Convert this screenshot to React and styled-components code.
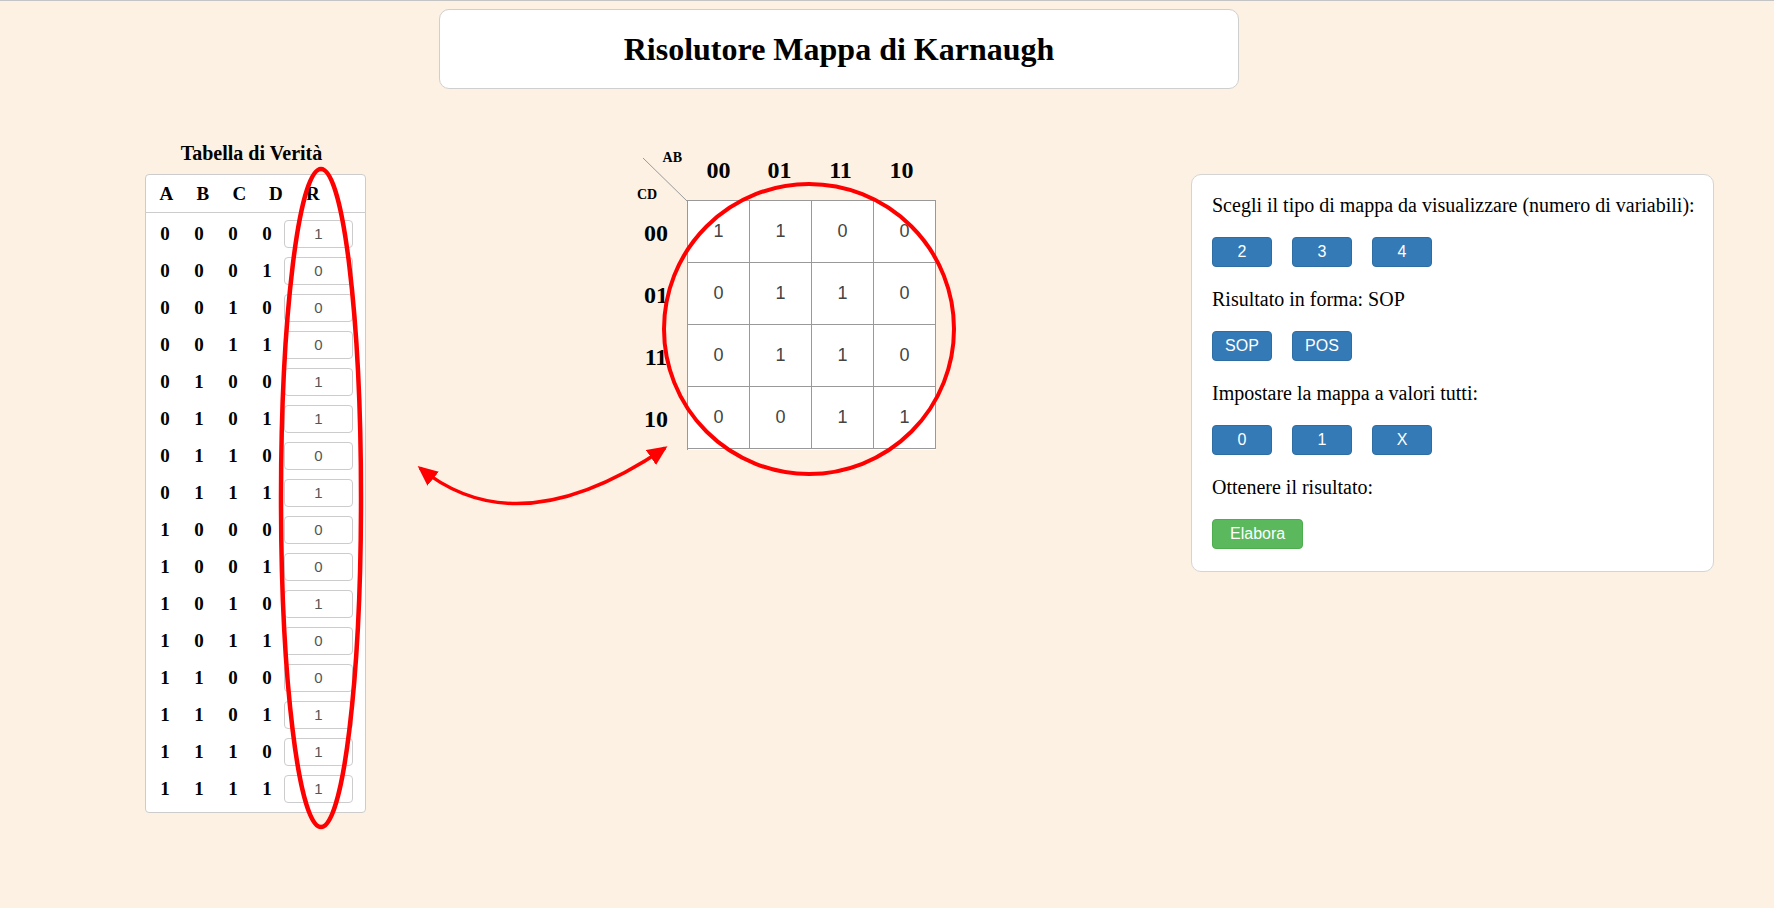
import React from 'react';
import styled, { createGlobalStyle } from 'styled-components';

const GlobalStyle = createGlobalStyle`
  html, body {
    margin: 0;
    padding: 0;
  }
  body {
    background: #fdf1e4;
    font-family: "Liberation Serif", "Times New Roman", serif;
    color: #000;
  }
`;

const Page = styled.div`
  position: relative;
  min-height: 908px;
  box-sizing: border-box;
  border-top: 1px solid #c4c4c4;
`;

const TitleBox = styled.header`
  width: 800px;
  height: 80px;
  margin: 8px 0 0 439px;
  box-sizing: border-box;
  border: 1px solid #cfcfcf;
  border-radius: 10px;
  background: #fff;
  display: flex;
  align-items: center;
  justify-content: center;
`;

const Title = styled.h1`
  margin: 0;
  font-size: 32px;
  font-weight: bold;
`;

const Content = styled.main`
  display: flex;
  align-items: flex-start;
  margin-top: 51px;
  padding-left: 145px;
`;

/* ---------- truth table ---------- */

const TruthColumn = styled.section`
  width: 221px;
  margin-top: 2px;
`;

const Caption = styled.h3`
  margin: 0 0 10px;
  padding-right: 8px;
  text-align: center;
  font-size: 20px;
  line-height: 22px;
  font-weight: bold;
`;

const TableBox = styled.div`
  border: 1px solid #cccccc;
  border-radius: 4px;
  background: #fff;
`;

const HeadRow = styled.div`
  display: grid;
  grid-template-columns: repeat(4, 36.5px) 1fr;
  align-items: center;
  height: 37px;
  padding-left: 2px;
  font-size: 19px;
  font-weight: bold;
  border-bottom: 1px solid #cccccc;
`;

const TableBody = styled.div`
  padding: 2px 0 5px;
`;

const DataRow = styled.div`
  display: grid;
  grid-template-columns: repeat(4, 34px) 69px;
  align-items: center;
  height: 37px;
  padding-left: 2px;
  font-size: 19px;
  font-weight: bold;
`;

const Bit = styled.span`
  text-align: center;
`;

const RHead = styled.span`
  padding-left: 12px;
`;

const ValueInput = styled.input`
  width: 69px;
  height: 28px;
  box-sizing: border-box;
  border: 1px solid #cccccc;
  border-radius: 4px;
  background: #fff;
  color: #555;
  font-family: "Liberation Sans", Arial, sans-serif;
  font-size: 15px;
  text-align: center;
  padding: 0;
  outline: none;
`;

/* ---------- karnaugh map ---------- */

const KMap = styled.section`
  display: grid;
  grid-template-columns: 57px auto;
  grid-template-rows: 60px auto;
  margin-left: 264px;
  font-weight: bold;
`;

const Corner = styled.div`
  position: relative;
  display: flex;
  flex-direction: column;
  font-size: 14px;
  line-height: 16px;
`;

const CornerLabel = styled.span`
  position: relative;
  align-self: ${p => (p.$top ? 'flex-end' : 'flex-start')};
  margin-top: ${p => (p.$top ? '10px' : 'auto')};
  margin-bottom: ${p => (p.$top ? '0' : '-3px')};
  padding: ${p => (p.$top ? '0 5px 0 0' : '0 0 0 7px')};
`;

const Diagonal = styled.svg`
  position: absolute;
  left: 0;
  top: 0;
  overflow: visible;
`;

const ColHeaders = styled.div`
  display: flex;
  align-items: center;
  padding-left: 1px;
`;

const HeadLabel = styled.span`
  width: 61px;
  text-align: center;
  font-size: 24px;
`;

const RowHeaders = styled.div`
  display: flex;
  flex-direction: column;
  padding-top: 2px;
  width: 52px;
`;

const RowLabel = styled.span`
  height: 62px;
  display: flex;
  align-items: center;
  justify-content: center;
  font-size: 24px;
`;

const MapGrid = styled.div`
  display: grid;
  grid-template-columns: repeat(4, 62px);
  grid-auto-rows: 62px;
  border-top: 1px solid #999;
  border-left: 1px solid #999;
  background: #fff;
`;

const MapCell = styled.div`
  border-right: 1px solid #999;
  border-bottom: 1px solid #999;
  display: flex;
  align-items: center;
  justify-content: center;
  font-family: "Liberation Sans", Arial, sans-serif;
  font-weight: normal;
  font-size: 18px;
  color: #444;
`;

/* ---------- control panel ---------- */

const Panel = styled.aside`
  width: 523px;
  margin: 34px 0 0 255px;
  box-sizing: border-box;
  padding: 18px 4px 22px 20px;
  border: 1px solid #d4d4d4;
  border-radius: 10px;
  background: #fff;
  display: flex;
  flex-direction: column;
  gap: 20px;
`;

const Label = styled.p`
  margin: 0;
  font-size: 20px;
  line-height: 24px;
  white-space: nowrap;
`;

const ButtonRow = styled.div`
  display: flex;
  gap: 20px;
`;

const Btn = styled.button`
  min-width: 60px;
  height: 30px;
  padding: 0 ${p => (p.$success ? '17px' : '0')};
  border: 1px solid ${p => (p.$success ? '#4cae4c' : '#2e6da4')};
  border-radius: 4px;
  background: ${p => (p.$success ? '#5cb85c' : '#337ab7')};
  color: #fff;
  font-family: "Liberation Sans", Arial, sans-serif;
  font-size: 16px;
  cursor: pointer;
`;

/* ---------- red annotations ---------- */

const Annotations = styled.svg`
  position: absolute;
  left: 0;
  top: -1px;
  pointer-events: none;
`;

const truthRows = [1, 0, 0, 0, 1, 1, 0, 1, 0, 0, 1, 0, 0, 1, 1, 1];
const mapValues = [
  [1, 1, 0, 0],
  [0, 1, 1, 0],
  [0, 1, 1, 0],
  [0, 0, 1, 1],
];
const gray = ['00', '01', '11', '10'];

export default function App() {
  return (
    <Page>
      <GlobalStyle />
      <TitleBox>
        <Title>Risolutore Mappa di Karnaugh</Title>
      </TitleBox>

      <Content>
        <TruthColumn>
          <Caption>Tabella di Verità</Caption>
          <TableBox>
            <HeadRow>
              <Bit>A</Bit>
              <Bit>B</Bit>
              <Bit>C</Bit>
              <Bit>D</Bit>
              <RHead>R</RHead>
            </HeadRow>
            <TableBody>
              {truthRows.map((r, i) => {
                const bits = i.toString(2).padStart(4, '0').split('');
                return (
                  <DataRow key={i}>
                    {bits.map((b, j) => (
                      <Bit key={j}>{b}</Bit>
                    ))}
                    <ValueInput readOnly value={r} />
                  </DataRow>
                );
              })}
            </TableBody>
          </TableBox>
        </TruthColumn>

        <KMap>
          <Corner>
            <Diagonal width="60" height="64">
              <line x1="13" y1="18" x2="58" y2="62" stroke="#999" strokeWidth="1" />
            </Diagonal>
            <CornerLabel $top>AB</CornerLabel>
            <CornerLabel>CD</CornerLabel>
          </Corner>
          <ColHeaders>
            {gray.map(g => <HeadLabel key={g}>{g}</HeadLabel>)}
          </ColHeaders>
          <RowHeaders>
            {gray.map(g => <RowLabel key={g}>{g}</RowLabel>)}
          </RowHeaders>
          <MapGrid>
            {mapValues.flat().map((v, i) => <MapCell key={i}>{v}</MapCell>)}
          </MapGrid>
        </KMap>

        <Panel>
          <Label>Scegli il tipo di mappa da visualizzare (numero di variabili):</Label>
          <ButtonRow>
            <Btn>2</Btn>
            <Btn>3</Btn>
            <Btn>4</Btn>
          </ButtonRow>
          <Label>Risultato in forma: SOP</Label>
          <ButtonRow>
            <Btn>SOP</Btn>
            <Btn>POS</Btn>
          </ButtonRow>
          <Label>Impostare la mappa a valori tutti:</Label>
          <ButtonRow>
            <Btn>0</Btn>
            <Btn>1</Btn>
            <Btn>X</Btn>
          </ButtonRow>
          <Label>Ottenere il risultato:</Label>
          <ButtonRow>
            <Btn $success>Elabora</Btn>
          </ButtonRow>
        </Panel>
      </Content>

      <Annotations width="1774" height="908">
        <defs>
          <marker
            id="head"
            viewBox="0 0 20 18"
            refX="17"
            refY="9"
            markerWidth="20"
            markerHeight="18"
            markerUnits="userSpaceOnUse"
            orient="auto-start-reverse"
          >
            <path d="M0,0 L20,9 L0,18 z" fill="#ff0000" />
          </marker>
        </defs>
        <ellipse cx="321" cy="498" rx="40" ry="329" fill="none" stroke="#ff0000" strokeWidth="4.5" />
        <circle cx="809" cy="329" r="145" fill="none" stroke="#ff0000" strokeWidth="4" />
        <path
          d="M420,468 Q518,548 665,448"
          fill="none"
          stroke="#ff0000"
          strokeWidth="3.5"
          markerStart="url(#head)"
          markerEnd="url(#head)"
        />
      </Annotations>
    </Page>
  );
}
